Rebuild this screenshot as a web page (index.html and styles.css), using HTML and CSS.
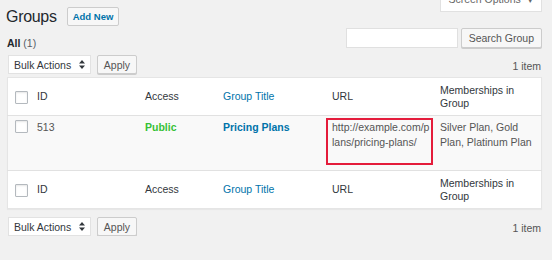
FILE: index.html
```html
<!DOCTYPE html>
<html lang="en">
<head>
    <meta charset="UTF-8">
    <title>Groups</title>
    <link rel="stylesheet" href="styles.css">
</head>
<body>
    <div class="wrap">
        <div class="top">
            <div class="title-group">
                <h1 class="page-title">Groups</h1>
                <a class="add-new">Add New</a>
            </div>
            <div class="screen-options">Screen Options <span class="caret">&#9660;</span></div>
        </div>

        <div class="filters">
            <div class="views"><b>All</b> <span class="count">(1)</span></div>
            <div class="search-box">
                <input type="text" class="search-input">
                <button class="btn">Search Group</button>
            </div>
        </div>

        <div class="tablenav">
            <div class="actions">
                <div class="select">Bulk Actions
                    <svg class="arrows" width="6" height="9" viewBox="0 0 6 9"><path d="M3 0L6 3.5H0z M3 9L0 5.5H6z" fill="#32373c"/></svg>
                </div>
                <button class="btn">Apply</button>
            </div>
            <div class="num">1 item</div>
        </div>

        <table class="list">
            <thead>
                <tr>
                    <th class="col-cb"><span class="cb"></span></th>
                    <th class="col-id">ID</th>
                    <th class="col-access">Access</th>
                    <th class="col-title"><a>Group Title</a></th>
                    <th class="col-url">URL</th>
                    <th class="col-members">Memberships in Group</th>
                </tr>
            </thead>
            <tbody>
                <tr class="alt">
                    <td class="col-cb"><span class="cb"></span></td>
                    <td>513</td>
                    <td class="public">Public</td>
                    <td><a class="row-title">Pricing Plans</a></td>
                    <td class="url-cell"><div class="highlight">http://example.com/p<br>lans/pricing-plans/</div></td>
                    <td class="col-members">Silver Plan, Gold Plan, Platinum Plan</td>
                </tr>
            </tbody>
            <tfoot>
                <tr>
                    <th class="col-cb"><span class="cb"></span></th>
                    <th>ID</th>
                    <th>Access</th>
                    <th><a>Group Title</a></th>
                    <th>URL</th>
                    <th class="col-members">Memberships in Group</th>
                </tr>
            </tfoot>
        </table>

        <div class="tablenav bottom">
            <div class="actions">
                <div class="select">Bulk Actions
                    <svg class="arrows" width="6" height="9" viewBox="0 0 6 9"><path d="M3 0L6 3.5H0z M3 9L0 5.5H6z" fill="#32373c"/></svg>
                </div>
                <button class="btn">Apply</button>
            </div>
            <div class="num">1 item</div>
        </div>
    </div>
</body>
</html>
```

FILE: styles.css
```css
body {
    margin: 0;
    background: #f1f1f1;
    font-family: "Liberation Sans", Arial, sans-serif;
    font-size: 10.5px;
    color: #32373c;
    overflow: hidden;
}
.wrap {
    padding: 0 10px 0 7px;
}
.top {
    display: flex;
    justify-content: space-between;
    align-items: flex-start;
    height: 28px;
}
.title-group {
    display: flex;
    align-items: center;
    margin-top: 7px;
}
.page-title {
    margin: 0;
    font-size: 16px;
    font-weight: 400;
    letter-spacing: -0.3px;
    line-height: 19px;
    color: #23282d;
    margin-left: -1px;
}
.add-new {
    margin-left: 10px;
    height: 17px;
    line-height: 17px;
    padding: 0 5px;
    border: 1px solid #ccc;
    border-radius: 2px;
    background: #f7f7f7;
    color: #0073aa;
    font-weight: bold;
    font-size: 9.5px;
}
.screen-options {
    margin-top: -8px;
    height: 20px;
    line-height: 14px;
    width: 102px;
    box-sizing: border-box;
    text-align: center;
    background: #fff;
    border: 1px solid #e1e1e1;
    border-top: none;
    color: #666;
    font-size: 10.5px;
}
.caret {
    font-size: 7px;
    margin-left: 3px;
}
.filters {
    display: flex;
    justify-content: space-between;
    align-items: flex-start;
}
.views {
    padding-top: 8px;
    line-height: 15px;
    color: #23282d;
}
.views .count {
    color: #555d66;
}
.search-box {
    display: flex;
    gap: 3px;
}
.search-input {
    width: 112px;
    height: 20px;
    box-sizing: border-box;
    margin: 0;
    border: 1px solid #e0e0e0;
    background: #fff;
}
.btn {
    font-family: inherit;
    font-size: 10.5px;
    color: #555;
    height: 20px;
    padding: 0 7px;
    margin: 0;
    border: 1px solid #ccc;
    border-radius: 2px;
    background: #f7f7f7;
    box-shadow: 0 1px 0 #ccc;
}
.tablenav {
    display: flex;
    justify-content: space-between;
    align-items: center;
    margin-top: 4px;
    height: 19px;
}
.tablenav.bottom {
    margin-top: 8px;
}
.actions {
    display: flex;
    gap: 6px;
    margin-left: 1px;
}
.actions .btn {
    height: 19px;
    width: 40px;
    padding: 0;
}
.select {
    width: 83px;
    height: 19px;
    box-sizing: border-box;
    display: flex;
    align-items: center;
    justify-content: space-between;
    padding: 0 5px 0 5px;
    background: #fff;
    border: 1px solid #e2e2e2;
    color: #32373c;
}
.num {
    color: #555;
    margin-top: 2px;
    margin-right: 1px;
}
.list {
    margin-top: 3px;
    width: 535px;
    border-collapse: collapse;
    table-layout: fixed;
    background: #fff;
    border: 1px solid #e5e5e5;
    box-shadow: 0 1px 1px rgba(0, 0, 0, 0.04);
}
.list th, .list td {
    text-align: left;
    font-weight: 400;
    padding: 0 8px;
}
.list thead th, .list tfoot th {
    height: 37px;
    line-height: 13px;
    vertical-align: middle;
}
.list thead tr {
    border-bottom: 1px solid #e1e1e1;
}
.list tfoot tr {
    border-top: 1px solid #e1e1e1;
}
.list th a {
    color: #0073aa;
}
.list .col-cb {
    width: 14px;
    padding: 0 0 0 7px;
}
.col-id { width: 92px; }
.col-access { width: 62px; }
.col-title { width: 93px; }
.col-url { width: 92px; }
.list .col-members {
    padding-right: 0;
}
.cb {
    display: block;
    width: 11px;
    height: 11px;
    border: 1px solid #b4b9be;
    border-radius: 1px;
    background: #fff;
    box-shadow: inset 0 1px 2px rgba(0, 0, 0, 0.1);
}
.list th .cb {
    margin-top: 1px;
}
.alt {
    background: #f9f9f9;
}
.alt td {
    height: 55px;
    vertical-align: top;
    padding-top: 4px;
    line-height: 15px;
    color: #555;
    box-sizing: border-box;
}
.alt td .cb {
    margin-top: 4px;
}
.list td.public {
    color: #35c135;
    font-weight: bold;
}
.row-title {
    color: #0073aa;
    font-weight: bold;
}
.alt td.url-cell {
    padding: 2px 0 0 2px;
}
.highlight {
    border: 2px solid #e41c3b;
    padding: 0 4px 13px 4px;
    margin-right: -1px;
    color: #555;
}
```
